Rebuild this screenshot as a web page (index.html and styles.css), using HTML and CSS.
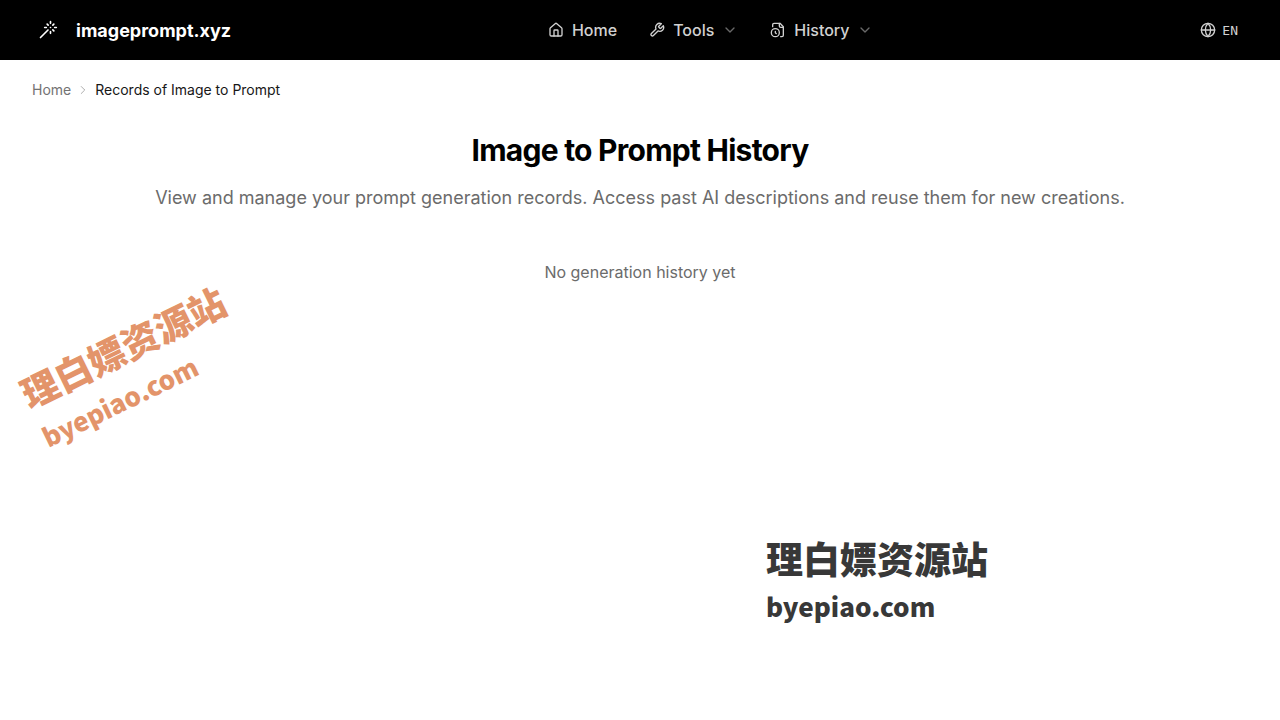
FILE: index.html
```
<!DOCTYPE html>
<html lang="en">
<head>
    <meta charset="UTF-8">
    <meta name="viewport" content="width=device-width, initial-scale=1.0">
    <title>Image to Prompt History</title>
    <link rel="stylesheet" href="styles.css">
</head>
<body>
    <header class="header">
        <a class="brand" href="#">
            <svg class="icon icon-logo" viewBox="0 0 24 24"><path d="M15 4V2M15 16v-2M8 9h2M20 9h2M17.8 11.8 19 13M15 9h.01M17.8 6.2 19 5M3 21l9-9M12.2 6.2 11 5"/></svg>
            <span>imageprompt.xyz</span>
        </a>
        <nav class="nav">
            <a class="nav-item" href="#">
                <svg class="icon" viewBox="0 0 24 24"><path d="M15 21v-8a1 1 0 0 0-1-1h-4a1 1 0 0 0-1 1v8"/><path d="M3 10a2 2 0 0 1 .709-1.528l7-5.999a2 2 0 0 1 2.582 0l7 5.999A2 2 0 0 1 21 10v9a2 2 0 0 1-2 2H5a2 2 0 0 1-2-2z"/></svg>
                Home
            </a>
            <button class="nav-item" type="button">
                <svg class="icon" viewBox="0 0 24 24"><path d="M14.7 6.3a1 1 0 0 0 0 1.4l1.6 1.6a1 1 0 0 0 1.4 0l3.77-3.77a6 6 0 0 1-7.94 7.94l-6.91 6.91a2.12 2.12 0 0 1-3-3l6.91-6.91a6 6 0 0 1 7.94-7.94l-3.76 3.76z"/></svg>
                Tools
                <svg class="icon chevron" viewBox="0 0 24 24"><path d="m6 9 6 6 6-6"/></svg>
            </button>
            <button class="nav-item" type="button">
                <svg class="icon" viewBox="0 0 24 24"><path d="M16 22h2a2 2 0 0 0 2-2V7l-5-5H6a2 2 0 0 0-2 2v3"/><path d="M14 2v4a2 2 0 0 0 2 2h4"/><circle cx="8" cy="16" r="6"/><path d="M9.5 17.5 8 16.25V14"/></svg>
                History
                <svg class="icon chevron" viewBox="0 0 24 24"><path d="m6 9 6 6 6-6"/></svg>
            </button>
        </nav>
        <button class="language" type="button">
            <svg class="icon" viewBox="0 0 24 24"><circle cx="12" cy="12" r="10"/><path d="M12 2a14.5 14.5 0 0 0 0 20 14.5 14.5 0 0 0 0-20"/><path d="M2 12h20"/></svg>
            EN
        </button>
    </header>

    <nav class="breadcrumb" aria-label="Breadcrumb">
        <a href="#">Home</a>
        <svg class="icon" viewBox="0 0 24 24"><path d="m9 18 6-6-6-6"/></svg>
        <span class="current">Records of Image to Prompt</span>
    </nav>

    <main class="container">
        <h1>Image to Prompt History</h1>
        <p class="subtitle">View and manage your prompt generation records. Access past AI descriptions and reuse them for new creations.</p>
        <p class="empty">No generation history yet</p>
    </main>

    <div class="watermark watermark-orange">
        <div class="watermark-name">理白嫖资源站</div>
        <div class="watermark-url">byepiao.com</div>
    </div>
    <div class="watermark watermark-dark">
        <div class="watermark-name">理白嫖资源站</div>
        <div class="watermark-url">byepiao.com</div>
    </div>
</body>
</html>
```

FILE: styles.css
```
body {
    font-family: Inter, "Noto Sans CJK SC", sans-serif;
    margin: 0;
    background-color: #fff;
    color: #0a0a0a;
}

a {
    color: inherit;
    text-decoration: none;
}

button {
    background: none;
    border: none;
    padding: 0;
    color: inherit;
    font: inherit;
    cursor: pointer;
}

.icon {
    width: 16px;
    height: 16px;
    flex-shrink: 0;
    fill: none;
    stroke: currentColor;
    stroke-width: 2;
    stroke-linecap: round;
    stroke-linejoin: round;
}

/* Header */
.header {
    display: flex;
    align-items: center;
    justify-content: space-between;
    height: 60px;
    padding: 0 32px 0 38px;
    background: #000;
    color: #d1d1d1;
}

.brand {
    display: flex;
    align-items: center;
    gap: 18px;
    color: #fff;
    font-size: 18px;
    font-weight: 700;
}

.icon-logo {
    width: 20px;
    height: 20px;
}

.nav {
    display: flex;
    align-items: center;
}

.nav-item {
    display: flex;
    align-items: center;
    gap: 8px;
    padding: 0 16px;
    font-size: 16px;
    font-weight: 500;
    line-height: 24px;
}

.nav-item .chevron {
    opacity: 0.5;
}

.language {
    display: flex;
    align-items: center;
    gap: 6px;
    padding: 0 10px;
    font-family: "DejaVu Sans Mono", monospace;
    font-size: 13px;
}

/* Breadcrumb */
.breadcrumb {
    display: flex;
    align-items: center;
    gap: 5px;
    padding: 20px 32px;
    color: #737373;
    font-size: 14px;
    line-height: 20px;
}

.breadcrumb .icon {
    width: 14px;
    height: 14px;
    stroke-width: 1;
}

.breadcrumb .current {
    color: #171717;
}

/* Page content */
.container {
    padding: 12px 32px;
    text-align: center;
}

h1 {
    margin: 0 0 16px;
    color: #000;
    font-size: 30px;
    font-weight: 700;
    line-height: 36px;
    letter-spacing: -0.025em;
}

.subtitle {
    margin: 0 0 48px;
    color: #6b6b6b;
    font-size: 18px;
    line-height: 28px;
}

.empty {
    margin: 0;
    color: #6b6b6b;
    font-size: 16px;
    line-height: 24px;
}

/* Watermarks float over the page */
.watermark {
    position: absolute;
    font-family: "Noto Sans CJK SC", sans-serif;
    font-weight: 900;
    white-space: nowrap;
    pointer-events: none;
}

.watermark-name {
    font-size: 37px;
    line-height: 48px;
}

.watermark-url {
    font-size: 26px;
    line-height: 48px;
}

.watermark-orange {
    top: 320px;
    left: 22px;
    color: #e3946a;
    transform: rotate(-26deg);
}

.watermark-dark {
    top: 534px;
    left: 766px;
    color: #383838;
}
```
